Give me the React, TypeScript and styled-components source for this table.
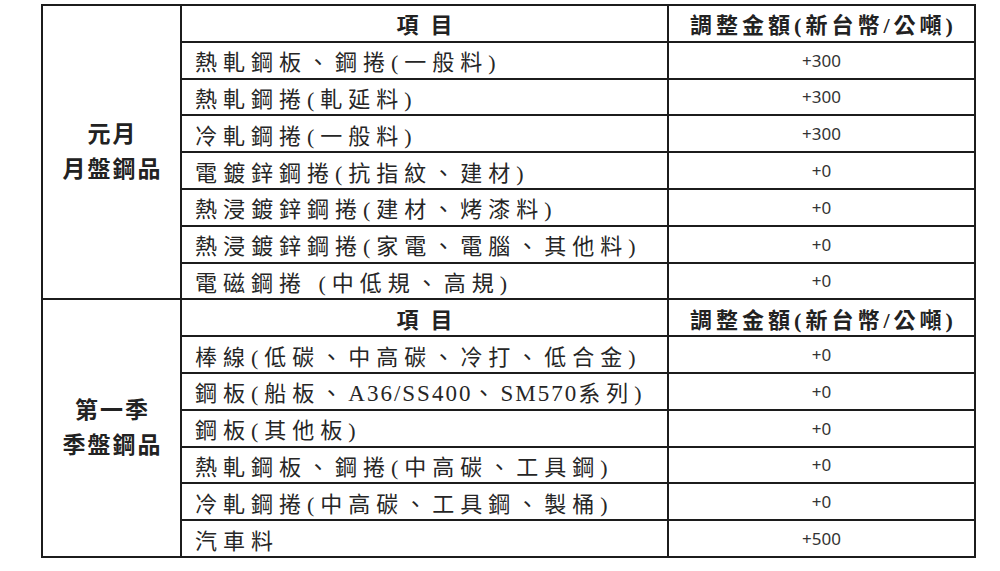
import React from 'react';
import styled, { createGlobalStyle } from 'styled-components';

interface PriceRow {
    name: string;
    amount: string;
}

interface PriceSection {
    label: string[];
    rows: PriceRow[];
}

const LINE = '#1c1c1c';
const CJK = `"Liberation Serif", "Noto Sans CJK TC", serif`;

const sections: PriceSection[] = [
    {
        label: ['元月', '月盤鋼品'],
        rows: [
            { name: '熱軋鋼板、鋼捲(一般料)', amount: '+300' },
            { name: '熱軋鋼捲(軋延料)', amount: '+300' },
            { name: '冷軋鋼捲(一般料)', amount: '+300' },
            { name: '電鍍鋅鋼捲(抗指紋、建材)', amount: '+0' },
            { name: '熱浸鍍鋅鋼捲(建材、烤漆料)', amount: '+0' },
            { name: '熱浸鍍鋅鋼捲(家電、電腦、其他料)', amount: '+0' },
            { name: '電磁鋼捲 (中低規、高規)', amount: '+0' },
        ],
    },
    {
        label: ['第一季', '季盤鋼品'],
        rows: [
            { name: '棒線(低碳、中高碳、冷打、低合金)', amount: '+0' },
            { name: '鋼板(船板、A36/SS400、SM570系列)', amount: '+0' },
            { name: '鋼板(其他板)', amount: '+0' },
            { name: '熱軋鋼板、鋼捲(中高碳、工具鋼)', amount: '+0' },
            { name: '冷軋鋼捲(中高碳、工具鋼、製桶)', amount: '+0' },
            { name: '汽車料', amount: '+500' },
        ],
    },
];

const GlobalStyle = createGlobalStyle`
    body {
        margin: 0;
        background: #ffffff;
    }
`;

const Page = styled.div`
    padding: 4px 0 0 41px;
`;

const Table = styled.table`
    border-collapse: collapse;
    table-layout: fixed;
    width: 935px;
    border: 2px solid ${LINE};
`;

const Row = styled.tr`
    height: 36.8px;
`;

const Cell = styled.td`
    border: 2px solid ${LINE};
    padding: 0;
    vertical-align: middle;
`;

const GroupCell = styled(Cell)`
    text-align: center;
    font-family: ${CJK};
    font-weight: 700;
    font-size: 23px;
    line-height: 35px;
    letter-spacing: 2px;
    color: #222;
    padding-left: 2px;
`;

const HeadCell = styled(Cell)<{ $spacing: number }>`
    text-align: center;
    font-family: ${CJK};
    font-weight: 700;
    font-size: 22px;
    letter-spacing: ${p => p.$spacing}px;
    color: #222;
    padding-left: ${p => p.$spacing}px;
`;

const NameCell = styled(Cell)`
    padding-left: 13px;
    font-family: ${CJK};
    font-size: 22px;
    letter-spacing: 6px;
    color: #262626;
    white-space: nowrap;
`;

// latin runs inside a name are set tighter than the CJK characters
const Latin = styled.span`
    font-size: 23px;
    letter-spacing: 2px;
`;

const AmountCell = styled(Cell)`
    text-align: center;
    font-family: "Noto Sans", "Open Sans", sans-serif;
    font-size: 17px;
    color: #333;
`;

const renderName = (name: string) =>
    name.split(/([A-Za-z0-9/]+)/).map((part, i) =>
        i % 2 === 1 ? <Latin key={i}>{part}</Latin> : part
    );

const Section: React.FC<{ section: PriceSection }> = ({ section }) => (
    <>
        <Row>
            <GroupCell rowSpan={section.rows.length + 1}>
                {section.label.map(line => <div key={line}>{line}</div>)}
            </GroupCell>
            <HeadCell $spacing={12}>項目</HeadCell>
            <HeadCell $spacing={4}>調整金額(新台幣/公噸)</HeadCell>
        </Row>
        {section.rows.map(row => (
            <Row key={row.name}>
                <NameCell>{renderName(row.name)}</NameCell>
                <AmountCell>{row.amount}</AmountCell>
            </Row>
        ))}
    </>
);

const App: React.FC = () => (
    <Page>
        <GlobalStyle />
        <Table>
            <colgroup>
                <col style={{ width: 139 }} />
                <col style={{ width: 487 }} />
                <col style={{ width: 307 }} />
            </colgroup>
            <tbody>
                {sections.map(s => <Section key={s.label[0]} section={s} />)}
            </tbody>
        </Table>
    </Page>
);

export default App;
